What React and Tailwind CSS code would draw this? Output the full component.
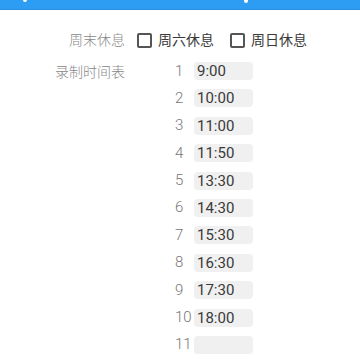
const times = ["9:00", "10:00", "11:00", "11:50", "13:30", "14:30", "15:30", "16:30", "17:30", "18:00", ""];

function Check({ label }) {
  return (
    <label className="flex items-center">
      <span className="w-[15px] h-[15px] rounded-[2px] border-2 border-[#555] bg-white" />
      <span className="ml-[6px] text-[#3a3a3a]">{label}</span>
    </label>
  );
}

export default function App() {
  return (
    <div
      className="w-[360px] h-[360px] bg-white overflow-hidden text-[14px]"
      style={{ fontFamily: 'Roboto, "Noto Sans CJK SC", sans-serif' }}
    >
      <div className="relative h-[10px] bg-[#2d9cf3] border-b border-[#2a8fe0]">
        <span className="absolute left-[23px] top-0 w-[4px] h-[2px] rounded-b-full bg-white" />
        <span className="absolute left-[244px] top-0 w-[4px] h-[3px] rounded-b-full bg-white" />
      </div>

      <div className="flex items-center h-[20px] mt-[20px]">
        <div className="w-[125px] text-right text-[#888] font-light">周末休息</div>
        <div className="ml-[12px]">
          <Check label="周六休息" />
        </div>
        <div className="ml-[16px]">
          <Check label="周日休息" />
        </div>
      </div>

      <div className="flex mt-[12px]">
        <div className="w-[125px] h-[20px] leading-[20px] text-right text-[#888] font-light">录制时间表</div>
        <div className="ml-[50px] flex flex-col gap-[9.4px]">
          {times.map((t, i) => (
            <div key={i} className="flex items-center h-[18px]">
              <span className="w-[19px] text-[15px] text-[#777] font-light leading-none">{i + 1}</span>
              <div className="w-[59px] h-[18px] rounded-[4px] bg-[#f0f0f0] pl-[3px] text-[15px] leading-[18px] text-[#3a3a3a]">
                {t}
              </div>
            </div>
          ))}
        </div>
      </div>
    </div>
  );
}
